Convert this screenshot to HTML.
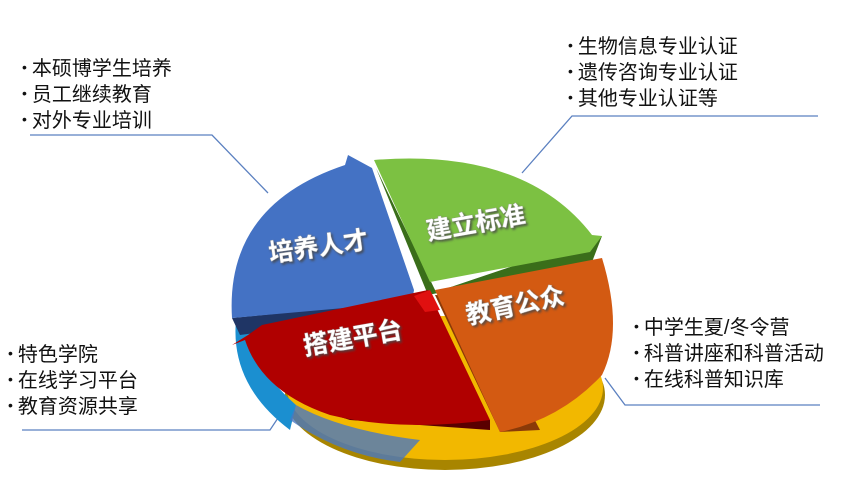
<!DOCTYPE html>
<html><head><meta charset="utf-8"><style>
body{margin:0;width:865px;height:479px;background:#fff;overflow:hidden;position:relative;font-family:"Liberation Sans","Noto Sans CJK SC",sans-serif}
.t{position:absolute;font-size:20px;line-height:25px;color:#111;white-space:nowrap}
.t div:before{content:"•";font-size:14px;margin-right:5px;position:relative;top:-3px}
svg{position:absolute;left:0;top:0}
.lb{font-family:"Liberation Sans","Noto Sans CJK SC",sans-serif;font-weight:bold;font-size:25px;fill:#fff;stroke:#888;stroke-width:.6;paint-order:stroke}
</style></head><body>
<svg width="865" height="479" viewBox="0 0 865 479">
<defs><filter id="sh"><feDropShadow dx="1.5" dy="2" stdDeviation="1" flood-color="#444" flood-opacity=".8"/></filter></defs>
<g fill="none" stroke="#5b80c0" stroke-width="1.3">
<polyline points="30,135 212,135 268,193"/>
<polyline points="818,116 572,116 522,173"/>
<polyline points="820,405 625,405 605,378"/>
<polyline points="22,430 270,430 290,400"/>
</g>
<!-- base -->
<ellipse cx="445" cy="395" rx="160" ry="75" fill="#a88500"/>
<ellipse cx="445" cy="388" rx="158" ry="72" fill="#f2b800"/>
<path d="M236,320 Q230,385 290,430 L296,405 Q250,365 252,322Z" fill="#1b8fd0"/>
<path d="M290,420 Q340,455 400,462 L420,440 Q340,430 296,405Z" fill="#4a78c0" opacity=".8"/>
<!-- blue -->
<path d="M232,318 L414,300 L416,312 L240,335Z" fill="#1f3565"/>
<path d="M232,318 Q225,205 345,165 L348,155 L372,168 L414,290 L412,302Z" fill="#4472c4"/>
<!-- green -->
<path d="M376,168 L428,295 L592,262 L602,236 L436,292Z" fill="#3a6e1a"/>
<path d="M374,160 Q525,148 592,235 L602,236 L590,252 L430,282Z" fill="#7cc142"/>
<!-- orange -->
<path d="M435,295 L500,432 L540,430 L470,296Z" fill="#8a3a08"/>
<path d="M435,290 L602,258 Q624,330 602,375 Q560,420 500,432Z" fill="#d35a12"/>
<!-- red -->
<path d="M245,338 Q280,400 350,420 L490,430 L490,420 Q340,420 260,340Z" fill="#5a0000"/>
<path d="M232,345 L248,335 L262,325 L428,290 L490,420 Q400,432 330,415 Q262,392 245,340Z" fill="#b00000"/>
<path d="M414,296 L430,290 L440,310 L425,312Z" fill="#e01010"/>
<text class="lb" x="270" y="262" transform="rotate(-8 270 262)" filter="url(#sh)">培养人才</text>
<text class="lb" x="428" y="240" transform="rotate(-10 428 240)" filter="url(#sh)">建立标准</text>
<text class="lb" x="468" y="324" transform="rotate(-12 468 324)" filter="url(#sh)">教育公众</text>
<text class="lb" x="305" y="355" transform="rotate(-10 305 355)" filter="url(#sh)">搭建平台</text>
</svg>
<div class="t" style="left:22px;top:57px"><div>本硕博学生培养</div><div>员工继续教育</div><div>对外专业培训</div></div>
<div class="t" style="left:568px;top:35px"><div>生物信息专业认证</div><div>遗传咨询专业认证</div><div>其他专业认证等</div></div>
<div class="t" style="left:634px;top:316px"><div>中学生夏/冬令营</div><div>科普讲座和科普活动</div><div>在线科普知识库</div></div>
<div class="t" style="left:8px;top:343px"><div>特色学院</div><div>在线学习平台</div><div>教育资源共享</div></div>
</body></html>
